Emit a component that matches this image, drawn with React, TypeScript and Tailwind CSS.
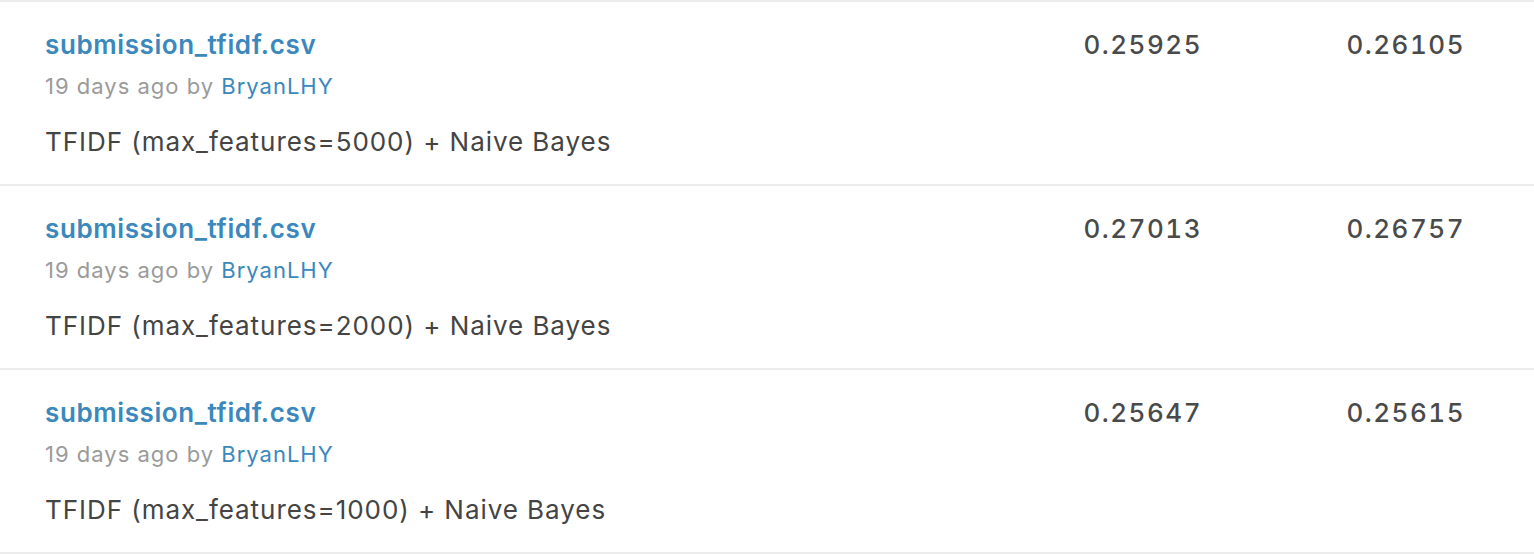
const rows = [
  { file: "submission_tfidf.csv", features: 5000, priv: "0.25925", pub: "0.26105" },
  { file: "submission_tfidf.csv", features: 2000, priv: "0.27013", pub: "0.26757" },
  { file: "submission_tfidf.csv", features: 1000, priv: "0.25647", pub: "0.25615" },
];

export default function App() {
  return (
    <div className="w-[1534px] h-[554px] bg-white overflow-hidden font-['Inter','Liberation_Sans',sans-serif]">
      <div className="border-t-2 border-[#ececec]">
        {rows.map((r, i) => (
          <div key={i} className="flex border-b-2 border-[#ececec] pl-[45px] pr-[69px] h-[184px]">
            <div className="flex-1 pt-[27px]">
              <a className="block text-[26px] leading-[32px] font-semibold text-[#3a88bc] tracking-[0.6px]">
                {r.file}
              </a>
              <div className="mt-[11px] text-[22px] leading-[28px] text-[#9a9a9a] tracking-[1px]">
                19 days ago by <span className="text-[#3a88bc]">BryanLHY</span>
              </div>
              <p className="mt-[26px] text-[26px] leading-[32px] text-[#444] tracking-[0.95px]">
                TFIDF (max_features={r.features}) + Naive Bayes
              </p>
            </div>
            <div className="w-[263px] pt-[27px] text-right text-[26px] leading-[32px] font-medium text-[#4a4a4a] tabular-nums tracking-[1.5px]">
              {r.priv}
            </div>
            <div className="w-[263px] pt-[27px] text-right text-[26px] leading-[32px] font-medium text-[#4a4a4a] tabular-nums tracking-[1.5px]">
              {r.pub}
            </div>
          </div>
        ))}
      </div>
    </div>
  );
}
